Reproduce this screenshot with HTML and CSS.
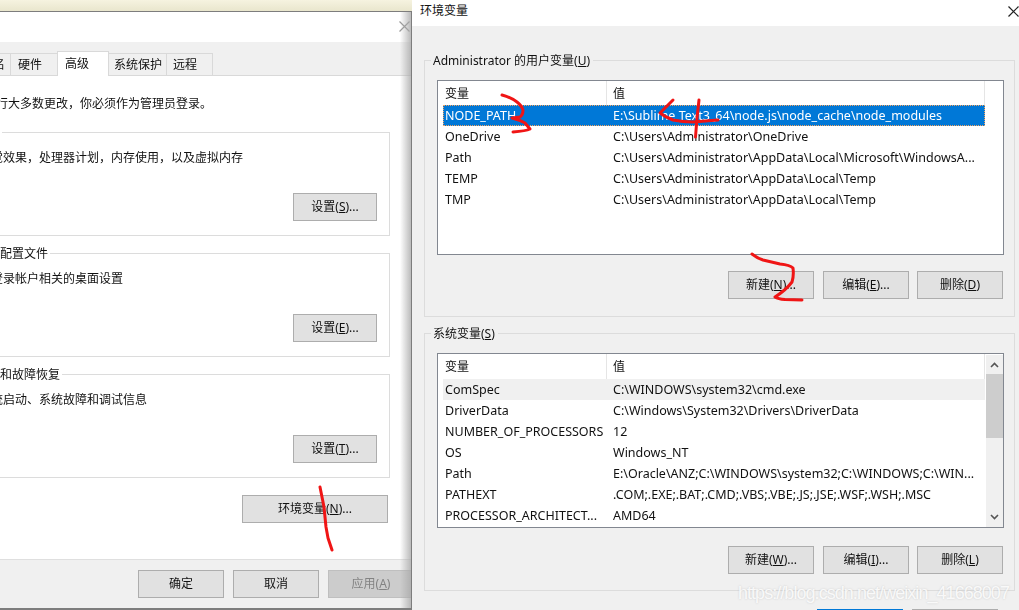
FILE: index.html
```html
<!DOCTYPE html>
<html lang="zh-CN">
<head>
<meta charset="utf-8">
<title>环境变量</title>
<link rel="stylesheet" href="styles.css">
</head>
<body>
<section class="win win-left">
  <header class="title-left">
    <svg class="x-icon" viewBox="0 0 11 11"><path d="M0.5 0.5L10.500 10.500M10.500 0.5L0.5 10.500"/></svg>
  </header>
  <nav class="tabs">
    <span class="tab t-name">计算机名</span>
    <span class="tab t-hw">硬件</span>
    <span class="tab t-adv">高级</span>
    <span class="tab t-sys">系统保护</span>
    <span class="tab t-rem">远程</span>
  </nav>
  <main class="page">
    <p class="note">要进行大多数更改，你必须作为管理员登录。</p>
    <fieldset class="group">
      <legend>性能</legend>
      <p>视觉效果，处理器计划，内存使用，以及虚拟内存</p>
      <div class="row-end"><button class="btn btn-set">设置(<u>S</u>)...</button></div>
    </fieldset>
    <fieldset class="group">
      <legend>用户配置文件</legend>
      <p>与登录帐户相关的桌面设置</p>
      <div class="row-end"><button class="btn btn-set">设置(<u>E</u>)...</button></div>
    </fieldset>
    <fieldset class="group">
      <legend>启动和故障恢复</legend>
      <p>系统启动、系统故障和调试信息</p>
      <div class="row-end"><button class="btn btn-set">设置(<u>T</u>)...</button></div>
    </fieldset>
    <div class="env-row"><button class="btn btn-env">环境变量(<u>N</u>)...</button></div>
  </main>
  <footer class="actions">
    <button class="btn btn-act">确定</button>
    <button class="btn btn-act">取消</button>
    <button class="btn btn-act is-disabled">应用(<u>A</u>)</button>
  </footer>
  <div class="edge-shadow"></div>
</section>

<section class="win win-right">
  <header class="title-right">
    <span>环境变量</span>
    <svg class="x-icon x-dark" viewBox="0 0 11 11"><path d="M0.5 0.5L10.500 10.500M10.500 0.5L0.5 10.500"/></svg>
  </header>
  <div class="env-body">
    <fieldset class="group-env group-user">
      <legend>Administrator 的用户变量(<u>U</u>)</legend>
      <div class="list">
        <div class="list-body">
          <div class="list-head"><span class="c1">变量</span><span class="c2">值</span></div>
          <div class="list-row is-selected"><span class="c1">NODE_PATH</span><span class="c2">E:\Sublime Text3_64\node.js\node_cache\node_modules</span></div>
          <div class="list-row"><span class="c1">OneDrive</span><span class="c2">C:\Users\Administrator\OneDrive</span></div>
          <div class="list-row"><span class="c1">Path</span><span class="c2">C:\Users\Administrator\AppData\Local\Microsoft\WindowsA...</span></div>
          <div class="list-row"><span class="c1">TEMP</span><span class="c2">C:\Users\Administrator\AppData\Local\Temp</span></div>
          <div class="list-row"><span class="c1">TMP</span><span class="c2">C:\Users\Administrator\AppData\Local\Temp</span></div>
        </div>
      </div>
      <div class="btn-row">
        <button class="btn btn-env-act">新建(<u>N</u>)...</button>
        <button class="btn btn-env-act">编辑(<u>E</u>)...</button>
        <button class="btn btn-env-act">删除(<u>D</u>)</button>
      </div>
    </fieldset>
    <fieldset class="group-env group-sys">
      <legend>系统变量(<u>S</u>)</legend>
      <div class="list">
        <div class="list-body">
          <div class="list-head"><span class="c1">变量</span><span class="c2">值</span></div>
          <div class="list-row is-hover"><span class="c1">ComSpec</span><span class="c2">C:\WINDOWS\system32\cmd.exe</span></div>
          <div class="list-row"><span class="c1">DriverData</span><span class="c2">C:\Windows\System32\Drivers\DriverData</span></div>
          <div class="list-row"><span class="c1">NUMBER_OF_PROCESSORS</span><span class="c2">12</span></div>
          <div class="list-row"><span class="c1">OS</span><span class="c2">Windows_NT</span></div>
          <div class="list-row"><span class="c1">Path</span><span class="c2">E:\Oracle\ANZ;C:\WINDOWS\system32;C:\WINDOWS;C:\WIN...</span></div>
          <div class="list-row"><span class="c1">PATHEXT</span><span class="c2">.COM;.EXE;.BAT;.CMD;.VBS;.VBE;.JS;.JSE;.WSF;.WSH;.MSC</span></div>
          <div class="list-row"><span class="c1">PROCESSOR_ARCHITECT...</span><span class="c2">AMD64</span></div>
        </div>
        <div class="scrollbar">
          <svg class="chev" viewBox="0 0 9 6"><path d="M1 5L4.500 1.500L8 5"/></svg>
          <div class="thumb-track"><div class="thumb"></div></div>
          <svg class="chev" viewBox="0 0 9 6"><path d="M1 1L4.500 4.500L8 1"/></svg>
        </div>
      </div>
      <div class="btn-row">
        <button class="btn btn-env-act">新建(<u>W</u>)...</button>
        <button class="btn btn-env-act">编辑(<u>I</u>)...</button>
        <button class="btn btn-env-act">删除(<u>L</u>)</button>
      </div>
    </fieldset>
    <div class="dialog-row">
      <button class="btn btn-ok"></button>
      <button class="btn btn-cancel"></button>
    </div>
  </div>
</section>

<svg class="scribbles" viewBox="0 0 1019 610">
  <path d="M320 487L324 507L326 527L328 538L332 550"/>
  <path d="M752 254Q757 258 763 260L780 264Q790 265 793 268Q794 276 792 282Q786 290 775 297Q778 299 785 299.500L802 300"/>
  <path d="M502 95Q510 97 517 102Q522 106 523 110Q523 115 520 117L512 118Q520 120 525 123L530 129Q526 131 513 132"/>
  <path d="M673 100L660 113Q665 117 673 120Q683 122 693 122L718 120"/>
  <path d="M699 100L697 118L695.500 137"/>
</svg>
<div class="watermark">https://blog.csdn.net/weixin_41668007</div>
</body>
</html>
```
FILE: styles.css
```css
* { box-sizing: border-box; }
html, body { margin: 0; height: 100%; }
body {
  width: 1019px;
  height: 610px;
  position: relative;
  overflow: hidden;
  background: linear-gradient(#f6f3e0, #e9e6cd 11px, #7d7d7d 11px, #7d7d7d 100%);
  font: 12px/16px "Noto Sans", "Noto Sans CJK SC", sans-serif;
  color: #111;
}
p { margin: 0; }
.win { position: absolute; overflow: hidden; display: flex; flex-direction: column; filter: blur(.35px); }
.x-icon { display: block; width: 11px; height: 11px; }
.x-icon path { fill: none; stroke: #999; stroke-width: 1.2; }
.x-dark path { stroke: #222; }

/* left dialog */
.win-left { left: -50px; top: 12px; width: 461px; height: 596px; background: #fff; }
.title-left { height: 30px; flex: none; padding: 9px 0 0 449px; }
.tabs {
  height: 34px; flex: none; background: #f0f0f0;
  border-bottom: 1px solid #d9d9d9;
  display: flex; align-items: flex-end;
}
.tab {
  height: 22px; line-height: 22px; white-space: nowrap; flex: none;
  background: #f0f0f0; border: 1px solid #d9d9d9; border-bottom: 0; margin-left: -1px;
  padding-left: 6px;
}
.t-name { width: 62px; padding-left: 7px; }
.t-hw { width: 48px; padding-left: 7px; }
.t-adv { width: 52px; height: 25px; background: #fff; margin-bottom: -1px; line-height: 21px; padding: 1px 0 0 7px; }
.t-sys { width: 59px; padding-left: 5px; }
.t-rem { width: 47px; }
.page { flex: 1; padding: 19px 0 0 17px; }
.note { height: 16px; line-height: 18px; margin: 0 0 13px 5px; }
.group {
  width: 423px; height: 112px; margin: 0 0 9px; padding: 9px 12px 0 8px;
  border: 1px solid #dcdcdc; min-width: 0;
}
.group legend { padding: 0 2px 0 0; line-height: 18px; height: 16px; margin-left: 0; }
.group p { height: 16px; line-height: 18px; margin-left: 3px; }
.row-end { display: flex; justify-content: flex-end; margin-top: 28px; }
.btn {
  display: block; padding: 0; height: 28px;
  background: #e1e1e1; border: 1px solid #adadad; border-radius: 0;
  font: inherit; color: #111; text-align: center;
}
.btn-set { width: 84px; }
.env-row { display: flex; justify-content: flex-end; margin-top: 17px; width: 421px; }
.btn-env { width: 146px; }
.actions {
  height: 49px; flex: none; background: #f0f0f0; border-top: 1px solid #dfdfdf;
  display: flex; gap: 9px; padding: 10px 0 0 188px;
}
.btn-act { width: 86px; flex: none; }
.is-disabled { background: #ccc; border-color: #bfbfbf; color: #838383; }
.edge-shadow {
  position: absolute; top: 0; right: 0; bottom: 0; width: 11px;
  background: linear-gradient(to right, rgba(170,170,170,0), rgba(170,170,170,.8));
}

/* right dialog */
.win-right { left: 412px; top: 0; width: 607px; height: 610px; background: #f0f0f0; filter: none; }
.title-right {
  height: 26px; flex: none; background: #fff; padding: 3px 0 0 8px;
  display: flex; justify-content: space-between;
}
.title-right .x-icon { margin: 3px 0 0; }
.env-body { padding: 26px 4px 0 12px; filter: blur(.35px); }
.group-env {
  margin: 0 0 8px; padding: 12px 10px 0 12px; height: 265px; min-width: 0;
  border: 1px solid #dcdcdc;
}
.group-sys { height: 266px; margin-bottom: 18px; }
.group-env legend { padding: 0 3px 0 2px; margin-left: -6px; height: 16px; line-height: 18px; }
.list { height: 175px; border: 1px solid #828790; background: #fff; display: flex; padding-left: 5px; overflow: hidden; }
.list-body { width: 542px; flex: none; }
.list-head { height: 25px; display: flex; line-height: 26px; }
.group-user .list-head { height: 24px; }
.list-head .c1, .list-head .c2 { border-right: 1px solid #e5e5e5; }
.list-row { height: 21px; line-height: 21px; display: flex; white-space: nowrap; font-size: 12.5px; }
.c1 { width: 164px; flex: none; padding-left: 2px; }
.c2 { flex: 1; padding-left: 6px; }
.is-selected { background: #0078d7; color: #fff; outline: 1px dotted #f4a460; outline-offset: -1px; }
.is-hover { background: #f0f0f0; }
.scrollbar { width: 17px; margin: 1px 0 0 1px; background: #f0f0f0; display: flex; flex-direction: column; align-items: center; flex: none; }
.chev { width: 9px; height: 6px; flex: none; margin: 7px 0; }
.chev path { fill: none; stroke: #555; stroke-width: 1.6; }
.thumb-track { flex: 1; width: 100%; }
.thumb { height: 64px; background: #cdcdcd; margin-top: -1px; }
.btn-row { display: flex; gap: 8px; justify-content: flex-end; margin-top: 16px; padding-right: 1px; }
.btn-row .btn:first-child { margin-right: 1px; }
.group-sys .btn-row { margin-top: 18px; }
.btn-env-act { width: 86px; flex: none; }
.dialog-row { display: flex; gap: 9px; justify-content: flex-end; padding-right: 17px; }
.btn-ok { width: 86px; flex: none; border-color: #0078d7; border-width: 2px; }
.btn-cancel { width: 86px; flex: none; border-color: #adadad; }

/* overlay */
.scribbles { position: absolute; left: 0; top: 0; width: 1019px; height: 610px; pointer-events: none; }
.scribbles path { fill: none; stroke: #f01515; stroke-width: 3; stroke-linecap: round; stroke-linejoin: round; }
.watermark {
  position: absolute; right: 10px; bottom: 6px;
  font: 18px/22px "Liberation Sans", sans-serif; letter-spacing: -.95px; color: rgba(255,255,255,.85);
  text-shadow: 0 0 2px rgba(150,150,150,.4);
}
```
